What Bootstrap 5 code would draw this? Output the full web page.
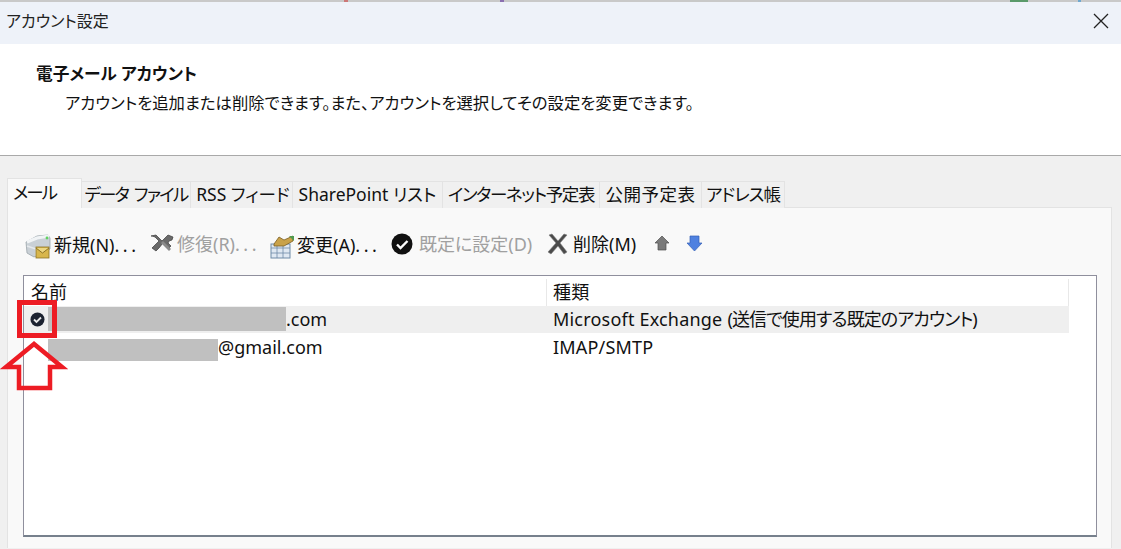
<!DOCTYPE html>
<html lang="ja">
<head>
<meta charset="utf-8">
<title>アカウント設定</title>
<link href="https://cdn.jsdelivr.net/npm/bootstrap@5.3.0/dist/css/bootstrap.min.css" rel="stylesheet">
<style>
html,body{height:549px;overflow:hidden}
body{position:relative;width:1121px;background:#f0f0f0;font-family:"Noto Sans","Noto Sans CJK JP",sans-serif;font-size:18px;color:#111;line-height:1.3;font-feature-settings:"palt"}
.topstrip{height:2px;background:linear-gradient(90deg,#c9c9c9 0 344px,#c77 344px 348px,#c9c9c9 348px 500px,#8a6fb0 500px 504px,#c9c9c9 504px 1010px,#5a9a6a 1010px 1028px,#c9c9c9 1028px 1078px,#6fa8d0 1078px 1081px,#c9c9c9 1081px 1121px)}
.titlebar{height:42px;background:#eef2f9;padding:0 0 4px 6px;font-size:16px;color:#222}
.closex{width:16px;height:16px;margin-right:12px}
.headpane{height:112px;background:#fff;border-bottom:1px solid #a9a9a9;padding:19px 0 0 36px}
.headtitle{font-weight:700;font-size:16.700px;color:#111;margin-bottom:8px}
.headsub{padding-left:29px;font-size:16.350px;color:#111}
.tabzone{padding:23px 9px 0 7px}
.nav-tabs.acct{border:0;flex-wrap:nowrap;height:29px;align-items:flex-end}
.acct .nav-link{height:27px;padding:0;margin:0;border:1px solid #e3e3e3;border-bottom:0;border-left:0;border-radius:0;background:#f0f0f0;color:#111;font-size:17.500px;text-align:center;white-space:nowrap;line-height:24px}
.acct .nav-link.active{height:30px;width:75px;background:#f9f9f9;border:1px solid #e3e3e3;border-bottom:0;color:#111;text-align:left;padding-left:5px;line-height:26px;letter-spacing:-2px}
.tw1{width:109px;letter-spacing:-1.800px;word-spacing:3px}.tw2{width:102px;padding-left:3px!important}.tw3{width:150px}.tw4{width:157px;letter-spacing:-1.400px}.tw5{width:102px;letter-spacing:.5px}.tw6{width:83px;letter-spacing:-1px}
.tabpanel{height:341px;background:#f9f9f9;border:1px solid #e3e3e3;border-bottom:0;padding:25px 15px 0 15px;margin-top:-1px}
.toolbar{height:42px;margin-left:2px}
.tool{display:flex;align-items:center;white-space:nowrap;font-size:18px}
.tool.off{color:#a0a0a0}
.dots{letter-spacing:3.500px}
.t1{width:123px}.t2{width:121px}.t3{width:122px}.t4{width:156px}.t5{width:107px}.t6{width:32px}
.tool svg{flex:none}
.lst{width:1074px;height:262px;background:#fff;border:1px solid #8f8f9d;border-bottom:2px solid #76808c;padding-top:1px}
.lrow{display:flex;width:1045px;font-size:18px}
.c1{width:523px;flex:none;display:flex;align-items:center;white-space:nowrap}
.c2{flex:1;display:flex;align-items:center;padding-left:6px;white-space:nowrap;letter-spacing:.2px}
.jpnarrow{letter-spacing:-.9px;margin-left:5px}
.lhead{height:29px;padding-top:2px}
.lhead .c1{padding-left:7px;border-right:1px solid #e8e8e8}
.lhead .c2{border-right:1px solid #e8e8e8}
.lrow1{height:27px;background:#efefef;padding-top:1px}
.lrow2{height:28px;padding-top:1px}
.maskb{display:block;background:#c0c0c0;flex:none}
.mk1{width:238px;height:24px;margin-top:-2px}
.mk2{width:170px;height:22px;margin-top:5px}
.ck{margin-left:6px;margin-right:3px;width:15px;height:15px;flex:none;margin-top:-2px}
.note-box{position:absolute;left:17px;top:300px;width:40px;height:38px;border:5px solid #ed1c24}
.note-arrow{position:absolute;left:0;top:340px}
</style>
</head>
<body>
<div class="topstrip"></div>
<div class="titlebar d-flex align-items-center justify-content-between">
  <span>アカウント設定</span>
  <svg class="closex" viewBox="0 0 16 16"><path d="M1 1l14 14M15 1L1 15" stroke="#222" stroke-width="1.3" fill="none"/></svg>
</div>
<div class="headpane">
  <div class="headtitle">電子メール アカウント</div>
  <div class="headsub">アカウントを追加または削除できます。また、アカウントを選択してその設定を変更できます。</div>
</div>
<div class="tabzone">
  <ul class="nav nav-tabs acct">
    <li class="nav-item"><a class="nav-link active" href="#">メール</a></li>
    <li class="nav-item"><a class="nav-link tw1" href="#">データ ファイル</a></li>
    <li class="nav-item"><a class="nav-link tw2" href="#">RSS フィード</a></li>
    <li class="nav-item"><a class="nav-link tw3" href="#">SharePoint リスト</a></li>
    <li class="nav-item"><a class="nav-link tw4" href="#">インターネット予定表</a></li>
    <li class="nav-item"><a class="nav-link tw5" href="#">公開予定表</a></li>
    <li class="nav-item"><a class="nav-link tw6" href="#">アドレス帳</a></li>
  </ul>
  <div class="tabpanel">
    <div class="toolbar d-flex align-items-start">
      <div class="tool t1">
        <svg width="29" height="26" viewBox="0 0 29 26"><path d="M1 9l11-6 11-1 2 3v11L9 24 2 20z" fill="#c9d0d6" stroke="#9aa4aa" stroke-width=".8"/><path d="M2 9l10-4 12-2" stroke="#f1f4f6" stroke-width="3" fill="none"/><path d="M2 13l9 3v7" stroke="#e6eaed" stroke-width="1.500" fill="none"/><circle cx="22" cy="5" r="1.400" fill="#5fd35f"/><rect x="11" y="14" width="13" height="11" fill="#d8b64c" stroke="#8d7326" stroke-width=".8"/><path d="M11 15l6.500 5 6.500-5" stroke="#8d7326" stroke-width="1" fill="#ecd681"/></svg>
        <span>新規(N)<span class="dots">...</span></span>
      </div>
      <div class="tool t2 off">
        <svg width="29" height="24" viewBox="0 0 29 24"><path d="M3 3l5-1 3 3 3 3 3-3 3-3 5 2-1 3-3 1-1 2 3 3-1 1-1 1-3-2-3-3-4 5-3 3-4-3 4-4 3-3-4-4-3-1z" fill="#6a6a6a" stroke="#3c3c3c" stroke-width=".7"/><path d="M13 10l8 8 2-2-8-8z" fill="#8a8a8a"/></svg>
        <span>修復(R)<span class="dots">...</span></span>
      </div>
      <div class="tool t3">
        <svg width="28" height="26" viewBox="0 0 28 26"><rect x="2" y="11" width="19" height="14" fill="#dfe8f2" stroke="#6f8ba8"/><path d="M2 15h19M8 11v14M14 11v14M2 20h19" stroke="#6f8ba8" stroke-width=".8"/><path d="M5 11l5-7 5 3 9-4v5l-9 5H5z" fill="#c9a24a" stroke="#7a5d22" stroke-width=".8"/><path d="M20 3h5v5z" fill="#4f9a4f"/></svg>
        <span>変更(A)<span class="dots">...</span></span>
      </div>
      <div class="tool t4 off">
        <svg width="28" height="24" viewBox="0 0 28 24"><circle cx="11" cy="11" r="10.500" fill="#111"/><path d="M6 11.500l3.500 3.500L16.500 8" stroke="#fff" stroke-width="2.400" fill="none"/></svg>
        <span>既定に設定(D)</span>
      </div>
      <div class="tool t5">
        <svg width="26" height="24" viewBox="0 0 26 24"><path d="M2 2l3-1 6 7 6-7 3 1-7 8 7 9-3 2-6-8-7 8-3-2 8-9z" fill="#4a4a4a" stroke="#7c7c7c" stroke-width=".6"/></svg>
        <span>削除(M)</span>
      </div>
      <div class="tool t6">
        <svg width="16" height="24" viewBox="0 0 16 24"><path d="M8 3l7 7h-3v7H4v-7H1z" fill="#7a7a7a" stroke="#4e4e4e" stroke-width=".7"/></svg>
      </div>
      <div class="tool">
        <svg width="17" height="24" viewBox="0 0 17 24"><path d="M4 3h9v7h3l-7.500 8L1 10h3z" fill="#4f81e0" stroke="#3560b5" stroke-width=".7"/></svg>
      </div>
    </div>
    <div class="lst">
      <div class="lrow lhead"><div class="c1">名前</div><div class="c2">種類</div></div>
      <div class="lrow lrow1">
        <div class="c1">
          <svg class="ck" viewBox="0 0 15 15"><circle cx="7.500" cy="7.500" r="7" fill="#1c2230"/><path d="M4 7.500l2.500 2.500L11 5.500" stroke="#e8e8e8" stroke-width="1.800" fill="none"/></svg>
          <span class="maskb mk1"></span><span>.com</span>
        </div>
        <div class="c2"><span>Microsoft Exchange</span><span class="jpnarrow">(送信で使用する既定のアカウント)</span></div>
      </div>
      <div class="lrow lrow2">
        <div class="c1"><span class="maskb mk2 ms-4"></span><span>@gmail.com</span></div>
        <div class="c2">IMAP/SMTP</div>
      </div>
    </div>
  </div>
</div>
<div class="note-box"></div>
<svg class="note-arrow" width="68" height="52" viewBox="0 0 68 52"><path d="M34 4L6 27h13v21h31V27h12z" fill="none" stroke="#ed1c24" stroke-width="4.500"/></svg>
</body>
</html>
